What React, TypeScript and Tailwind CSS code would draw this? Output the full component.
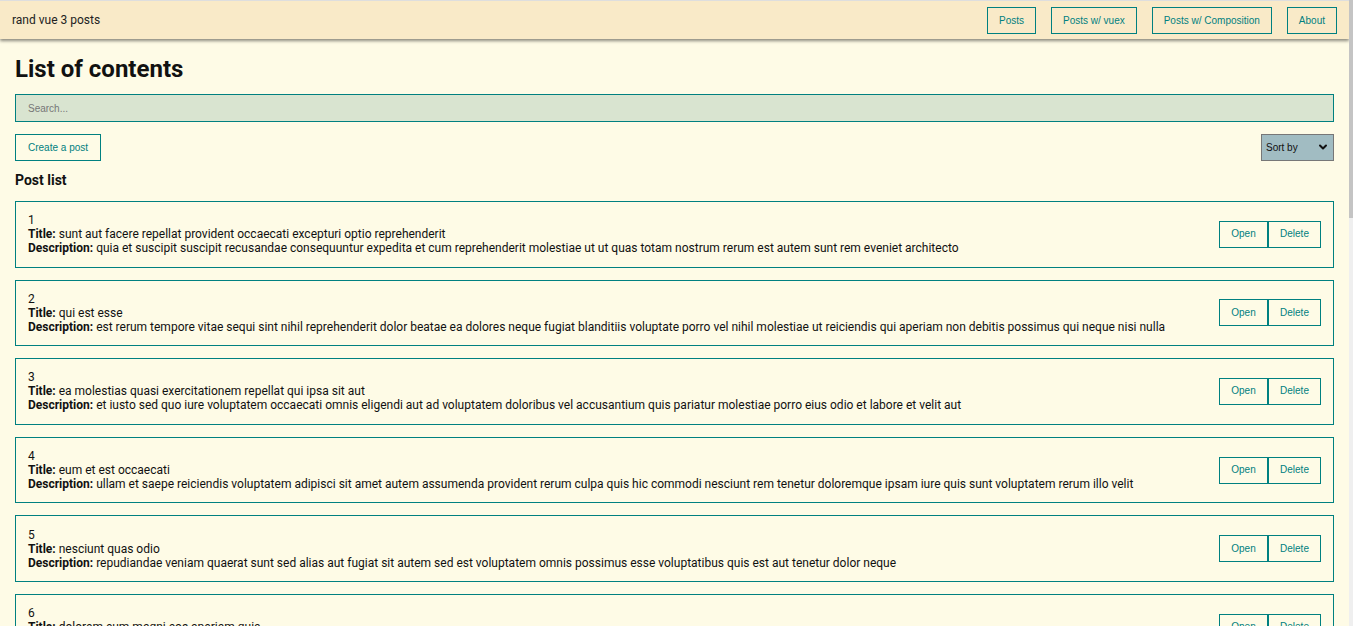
import { ChevronDown } from "lucide-react";

const posts = [
  {
    id: 1,
    title: "sunt aut facere repellat provident occaecati excepturi optio reprehenderit",
    body: "quia et suscipit suscipit recusandae consequuntur expedita et cum reprehenderit molestiae ut ut quas totam nostrum rerum est autem sunt rem eveniet architecto",
  },
  {
    id: 2,
    title: "qui est esse",
    body: "est rerum tempore vitae sequi sint nihil reprehenderit dolor beatae ea dolores neque fugiat blanditiis voluptate porro vel nihil molestiae ut reiciendis qui aperiam non debitis possimus qui neque nisi nulla",
  },
  {
    id: 3,
    title: "ea molestias quasi exercitationem repellat qui ipsa sit aut",
    body: "et iusto sed quo iure voluptatem occaecati omnis eligendi aut ad voluptatem doloribus vel accusantium quis pariatur molestiae porro eius odio et labore et velit aut",
  },
  {
    id: 4,
    title: "eum et est occaecati",
    body: "ullam et saepe reiciendis voluptatem adipisci sit amet autem assumenda provident rerum culpa quis hic commodi nesciunt rem tenetur doloremque ipsam iure quis sunt voluptatem rerum illo velit",
  },
  {
    id: 5,
    title: "nesciunt quas odio",
    body: "repudiandae veniam quaerat sunt sed alias aut fugiat sit autem sed est voluptatem omnis possimus esse voluptatibus quis est aut tenetur dolor neque",
  },
  {
    id: 6,
    title: "dolorem eum magni eos aperiam quia",
    body: "ut aspernatur corporis harum nihil quis provident sequi mollitia nobis aliquid molestiae perspiciatis et ea nemo ab reprehenderit accusantium quas voluptate dolores velit et doloremque molestiae",
  },
  {
    id: 7,
    title: "magnam facilis autem",
    body: "dolore placeat quibusdam ea quo vitae magni quis enim qui quis quo nemo aut saepe quidem repellat excepturi ut quia sunt ut sequi eos ea sed quas",
  },
  {
    id: 8,
    title: "dolorem dolore est ipsam",
    body: "dignissimos aperiam dolorem qui eum facilis quibusdam animi sint suscipit qui sint possimus cum quaerat magni maiores excepturi ipsam ut commodi dolor voluptatum modi aut vitae",
  },
  {
    id: 9,
    title: "nesciunt iure omnis dolorem tempora et accusantium",
    body: "consectetur animi nesciunt iure dolore enim quia ad veniam autem ut quam aut nobis et est aut quod aut provident voluptas autem voluptas",
  },
  {
    id: 10,
    title: "optio molestias id quia eum",
    body: "quo et expedita modi cum officia vel magni doloribus qui repudiandae vero nisi sit quos veniam quod sed accusamus veritatis error",
  },
];

const navLinks = ["Posts", "Posts w/ vuex", "Posts w/ Composition", "About"];

function Navbar() {
  return (
    <nav className="flex h-[39px] items-center justify-between border-t border-[#dedede] bg-[#f9eac8] pl-[12px] pr-[12px] shadow-[0_2px_3px_rgba(0,0,0,0.45)]">
      <div className="text-[12px] text-[#222]">rand vue 3 posts</div>
      <div className="flex gap-[15px]">
        {navLinks.map((l) => (
          <button
            key={l}
            className="h-[27px] border border-[#008080] px-[11px] font-['Liberation_Sans'] text-[10px] text-[#008080]"
          >
            {l}
          </button>
        ))}
      </div>
    </nav>
  );
}

function PostItem({ post }: { post: (typeof posts)[number] }) {
  return (
    <div className="flex items-center justify-between border border-[#008080] px-[12px] py-[11.3px] leading-[14px]">
      <div className="text-[12px] text-[#111]">
        <div>{post.id}</div>
        <div>
          <strong>Title:</strong> {post.title}
        </div>
        <div>
          <strong>Description:</strong> {post.body}
        </div>
      </div>
      <div className="flex shrink-0">
        <button className="h-[27px] w-[49px] border border-[#008080] font-['Liberation_Sans'] text-[10px] text-[#008080]">
          Open
        </button>
        <button className="h-[27px] w-[53px] border border-[#008080] font-['Liberation_Sans'] text-[10px] text-[#008080]">
          Delete
        </button>
      </div>
    </div>
  );
}

export default function App() {
  return (
    <div className="flex min-h-screen bg-[#fefbe6] font-['Roboto',sans-serif] text-[#111]">
      <div className="min-w-0 flex-1">
        <Navbar />
        <main className="px-[15px] pb-[20px]">
          <h1 className="mt-[16px] text-[24px] leading-[28px] font-bold">List of contents</h1>
          <input
            placeholder="Search..."
            className="mt-[11px] h-[28px] w-full border border-[#008080] bg-[#d9e4d0] px-[12px] font-['Liberation_Sans'] text-[10px] outline-none placeholder:text-[#777]"
          />
          <div className="mt-[12px] flex items-center justify-between">
            <button className="h-[27px] border border-[#008080] px-[12px] font-['Liberation_Sans'] text-[10px] text-[#008080]">
              Create a post
            </button>
            <div className="relative">
              <select className="h-[27px] w-[73px] appearance-none border border-[#777] bg-[#a1bcc2] pl-[4px] font-['Liberation_Sans'] text-[10px] text-[#111] outline-none">
                <option>Sort by</option>
              </select>
              <ChevronDown
                size={12}
                strokeWidth={4}
                className="pointer-events-none absolute top-[7px] right-[5px] text-[#111]"
              />
            </div>
          </div>
          <h2 className="mt-[11px] text-[14px] leading-[16px] font-bold">Post list</h2>
          <div className="mt-[13px] flex flex-col gap-[12px]">
            {posts.map((p) => (
              <PostItem key={p.id} post={p} />
            ))}
          </div>
        </main>
      </div>
      <aside className="sticky top-0 h-screen w-[4px] shrink-0 self-start bg-[#efefef]">
        <div className="h-[218px] w-full bg-[#c4c4c4]" />
      </aside>
    </div>
  );
}
